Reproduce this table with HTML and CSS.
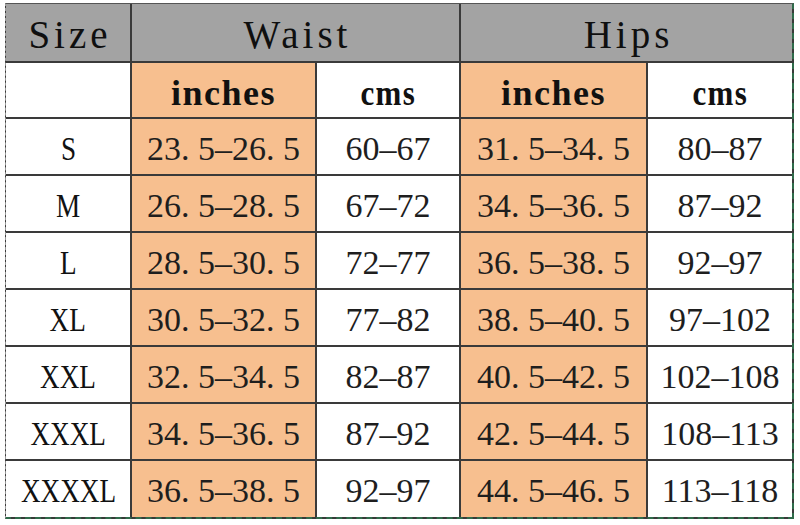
FILE: index.html
```html
<!DOCTYPE html>
<html>
<head>
<meta charset="utf-8">
<link rel="stylesheet" href="styles.css">
</head>
<body>
<div class="chart">
  <div class="cell head size">Size</div>
  <div class="cell head span2">Waist</div>
  <div class="cell head span2">Hips</div>

  <div class="cell blank"></div>
  <div class="cell sub orange">inches</div>
  <div class="cell sub"><span class="narrow">cms</span></div>
  <div class="cell sub orange">inches</div>
  <div class="cell sub"><span class="narrow">cms</span></div>

  <div class="cell lbl"><span class="sq">S</span></div>
  <div class="cell num orange">23. 5–26. 5</div>
  <div class="cell num">60–67</div>
  <div class="cell num orange">31. 5–34. 5</div>
  <div class="cell num">80–87</div>

  <div class="cell lbl"><span class="sq">M</span></div>
  <div class="cell num orange">26. 5–28. 5</div>
  <div class="cell num">67–72</div>
  <div class="cell num orange">34. 5–36. 5</div>
  <div class="cell num">87–92</div>

  <div class="cell lbl"><span class="sq">L</span></div>
  <div class="cell num orange">28. 5–30. 5</div>
  <div class="cell num">72–77</div>
  <div class="cell num orange">36. 5–38. 5</div>
  <div class="cell num">92–97</div>

  <div class="cell lbl"><span class="sq">XL</span></div>
  <div class="cell num orange">30. 5–32. 5</div>
  <div class="cell num">77–82</div>
  <div class="cell num orange">38. 5–40. 5</div>
  <div class="cell num">97–102</div>

  <div class="cell lbl"><span class="sq">XXL</span></div>
  <div class="cell num orange">32. 5–34. 5</div>
  <div class="cell num">82–87</div>
  <div class="cell num orange">40. 5–42. 5</div>
  <div class="cell num">102–108</div>

  <div class="cell lbl"><span class="sq">XXXL</span></div>
  <div class="cell num orange">34. 5–36. 5</div>
  <div class="cell num">87–92</div>
  <div class="cell num orange">42. 5–44. 5</div>
  <div class="cell num">108–113</div>

  <div class="cell lbl"><span class="sq">XXXXL</span></div>
  <div class="cell num orange">36. 5–38. 5</div>
  <div class="cell num">92–97</div>
  <div class="cell num orange">44. 5–46. 5</div>
  <div class="cell num">113–118</div>
</div>
</body>
</html>
```

FILE: styles.css
```css
html, body {
  margin: 0;
  padding: 0;
  background: #ffffff;
}

body {
  width: 800px;
  height: 525px;
  overflow: hidden;
  font-family: "Liberation Serif", "Times New Roman", serif;
  color: #1a1a1a;
}

.chart {
  margin: 3px 0 0 5px;
  width: 786px;
  display: grid;
  grid-template-columns: 124px 183px 142px 185px 144px;
  grid-template-rows: 57px 54px 55px 55px 55px 55px 55px 55px 56px;
  gap: 2px;
  background: #3a3a3a;
  border-top: 1px solid #555555;
  border-left: 1px dashed #9a9a9a;
  border-right: 2px dashed #2f6b4a;
  border-bottom: 2px dashed #2f6b4a;
}

.cell {
  background: #ffffff;
  display: flex;
  align-items: center;
  justify-content: center;
  white-space: nowrap;
}

.head {
  background: #a3a3a3;
  font-size: 39px;
  letter-spacing: 4px;
  color: #0f0f0f;
  padding-top: 4px;
  padding-left: 4px;
}

.span2 {
  grid-column: span 2;
}

.orange {
  background: #f7bf8f;
}

.sub {
  font-weight: bold;
  font-size: 36px;
  letter-spacing: 1.5px;
  color: #111111;
  padding-top: 6px;
}

.narrow {
  display: inline-block;
  transform: scaleX(0.86);
}

.num {
  font-size: 34px;
  color: #1e1e1e;
  padding-top: 4px;
}

.lbl {
  font-size: 34px;
  color: #111111;
  padding-top: 4px;
}

.sq {
  display: inline-block;
  transform: scaleX(0.8);
}
```
